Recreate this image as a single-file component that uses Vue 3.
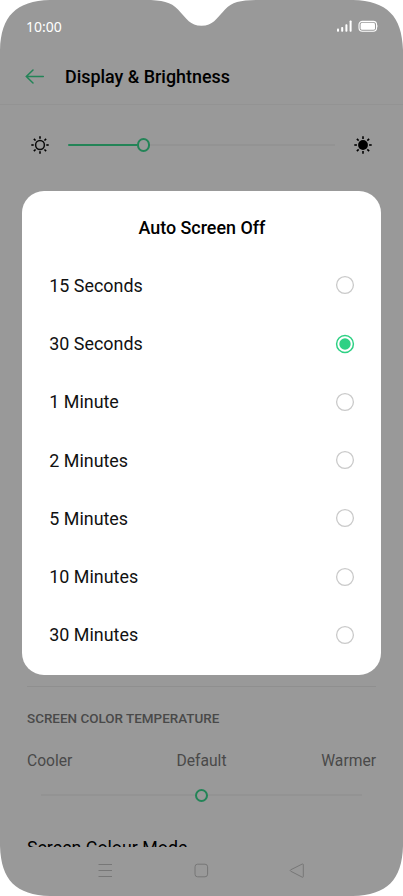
<script setup>
import { ref } from 'vue'

const options = ['15 Seconds', '30 Seconds', '1 Minute', '2 Minutes', '5 Minutes', '10 Minutes', '30 Minutes']
const selected = ref('30 Seconds')
const rays = [0, 45, 90, 135, 180, 225, 270, 315]
</script>

<template>
  <div class="phone">
    <svg class="silhouette" viewBox="0 0 403 896" aria-hidden="true">
      <path
        d="M0 50C1 16 16 1 50 0H145C162 0 171 2 178 9.500C187 19 190 25.700 201.500 25.700C213 25.700 216 19 225 9.500C232 2 241 0 258 0H353C387 1 402 16 403 50V846C402 880 387 895 353 896H50C16 895 1 880 0 846Z"
      />
    </svg>

    <div class="status">
      <span class="clock">10:00</span>
      <svg class="indicators" width="42" height="14" viewBox="0 0 42 14">
        <g fill="#fff">
          <rect x="0" y="8.500" width="2" height="3.300" rx=".8" />
          <rect x="4.200" y="7" width="2" height="4.800" rx=".8" />
          <rect x="8.400" y="4.300" width="2" height="7.500" rx=".8" />
          <rect x="12.600" y=".5" width="2" height="11.300" rx=".8" />
          <rect x="23.600" y="2.800" width="14.400" height="7" rx="1.600" />
          <path d="M39.700 4.100q1.700 2.200 0 4.400z" />
        </g>
        <rect x="22" y="1.400" width="17.600" height="9.800" rx="3.400" fill="none" stroke="#fff" stroke-width="1.100" />
      </svg>
    </div>

    <header class="header">
      <svg class="back" width="20" height="16" viewBox="0 0 20 16">
        <path d="M18.300 7.500H1.300M8 1L1.300 7.500L8 14" />
      </svg>
      <h1>Display &amp; Brightness</h1>
    </header>

    <section class="brightness">
      <svg class="sun" width="18" height="18" viewBox="-9 -9 18 18">
        <circle r="4.400" fill="none" stroke="#0a0a0a" stroke-width="1.500" />
        <path v-for="a in rays" :key="a" d="M0-6.300V-8.700" :transform="`rotate(${a})`" />
      </svg>
      <div class="track">
        <div class="fill"></div>
        <div class="knob"></div>
        <div class="rest"></div>
      </div>
      <svg class="sun" width="18" height="18" viewBox="-9 -9 18 18">
        <circle r="4.900" fill="#000" />
        <path v-for="a in rays" :key="a" d="M0-6.100V-8.700" :transform="`rotate(${a})`" />
      </svg>
    </section>

    <section class="temperature">
      <h2>SCREEN COLOR TEMPERATURE</h2>
      <div class="labels"><span>Cooler</span><span>Default</span><span>Warmer</span></div>
      <div class="track temp-track">
        <div class="rest"></div>
        <div class="knob"></div>
        <div class="rest"></div>
      </div>
    </section>
    <div class="mode"><span>Screen Colour Mode</span></div>

    <nav class="nav">
      <svg width="16" height="16" viewBox="0 0 16 16"><path d="M1.500 1.500h13.500M1.500 7.500h13.500M1.500 13.500h13.500" /></svg>
      <svg width="16" height="16" viewBox="0 0 16 16"><rect x="2" y="1.200" width="12.600" height="12.600" rx="2.600" /></svg>
      <svg width="16" height="16" viewBox="0 0 16 16"><path d="M13.300 1L1.700 6.800Q.6 7.500 1.700 8.200L13.300 14.200Q14.300 14.500 14.300 13.500V1.700Q14.300 .7 13.300 1Z" /></svg>
    </nav>

    <div class="dialog" role="dialog" aria-label="Auto Screen Off">
      <h3>Auto Screen Off</h3>
      <div
        v-for="option in options"
        :key="option"
        class="option"
        role="radio"
        :aria-checked="selected === option"
        @click="selected = option"
      >
        <span>{{ option }}</span>
        <svg class="radio" :class="{ on: selected === option }" width="20" height="20" viewBox="-10 -10 20 20">
          <circle class="ring" r="8.400" />
          <circle v-if="selected === option" class="dot" r="5.700" />
        </svg>
      </div>
    </div>
  </div>
</template>

<style>
body {
  background: #fff;
}
</style>

<style scoped>
.phone {
  position: relative;
  display: flex;
  flex-direction: column;
  width: 403px;
  height: 896px;
  overflow: hidden;
  isolation: isolate;
  font-family: Roboto, "Liberation Sans", sans-serif;
  color: #000;
}
.silhouette {
  position: absolute;
  inset: 0;
  z-index: -1;
  width: 100%;
  height: 100%;
  fill: #999;
}
h1,
h2,
h3 {
  margin: 0;
  font-weight: 500;
}
.status {
  flex: none;
  display: flex;
  justify-content: space-between;
  align-items: center;
  height: 14px;
  padding: 20px 24px 14px 26px;
  color: #fff;
}
.clock {
  font: 14px/14px "Noto Sans", sans-serif;
}
.header {
  flex: none;
  box-sizing: border-box;
  display: flex;
  align-items: center;
  gap: 20px;
  height: 57px;
  padding: 2px 0 0 25px;
  border-bottom: 1px solid #939393;
}
.back {
  fill: none;
  stroke: #238457;
  stroke-width: 1.5;
  stroke-linecap: round;
}
h1 {
  font-size: 17.9px;
  line-height: 22px;
}
.brightness {
  flex: none;
  display: flex;
  align-items: center;
  gap: 19px;
  height: 80px;
  padding: 0 31px;
}
.sun {
  flex: none;
  stroke: #000;
  stroke-width: 1.6;
}
.sun circle[fill="#000"] {
  stroke: none;
}
.track {
  display: flex;
  align-items: center;
  flex: 1;
}
.fill {
  width: 69px;
  height: 2.6px;
  border-radius: 2px 0 0 2px;
  background: #238457;
}
.knob {
  box-sizing: border-box;
  flex: none;
  width: 13.4px;
  height: 13.4px;
  border: 2px solid #238457;
  border-radius: 50%;
}
.rest {
  flex: 1;
  height: 2px;
  background: #939393;
}
.temperature {
  margin: 501px 27px 0;
  border-top: 1px solid #8f8f8f;
}
h2 {
  margin-top: 24px;
  font-size: 13.45px;
  line-height: 16px;
  color: #494949;
}
.labels {
  display: grid;
  grid-template-columns: 1fr auto 1fr;
  margin-top: 24px;
  font-size: 15.65px;
  line-height: 20px;
  color: #494949;
}
.labels span:last-child {
  text-align: right;
}
.temp-track {
  margin: 17.6px 14px 0;
}
.mode {
  flex: none;
  height: 13px;
  margin: 32px 27px 0;
  padding-top: 3px;
  box-sizing: border-box;
  overflow: hidden;
  font-size: 17.8px;
  line-height: 22px;
}
.nav {
  display: flex;
  justify-content: space-between;
  align-items: center;
  height: 49px;
  padding: 0 98px 0 97px;
}
.nav svg {
  fill: none;
  stroke: #777;
  stroke-width: 1;
}
.dialog {
  position: absolute;
  top: 191px;
  left: 22.3px;
  box-sizing: border-box;
  width: 358.3px;
  height: 483.5px;
  padding: 26px 26px 0 27px;
  border-radius: 22px;
  background: #fff;
}
.dialog h3 {
  margin-bottom: 17.3px;
  font-size: 17.9px;
  line-height: 22px;
  text-align: center;
}
.option {
  display: flex;
  justify-content: space-between;
  align-items: center;
  height: 58.25px;
  font-size: 17.9px;
  line-height: 22px;
  color: #111;
}
.option span {
  padding-top: 1px;
}
.radio {
  fill: none;
}
.ring {
  stroke: #cacaca;
  stroke-width: 1.3;
}
.on .ring {
  stroke: #2ed184;
  stroke-width: 1.5;
}
.dot {
  fill: #2ed184;
}
</style>
